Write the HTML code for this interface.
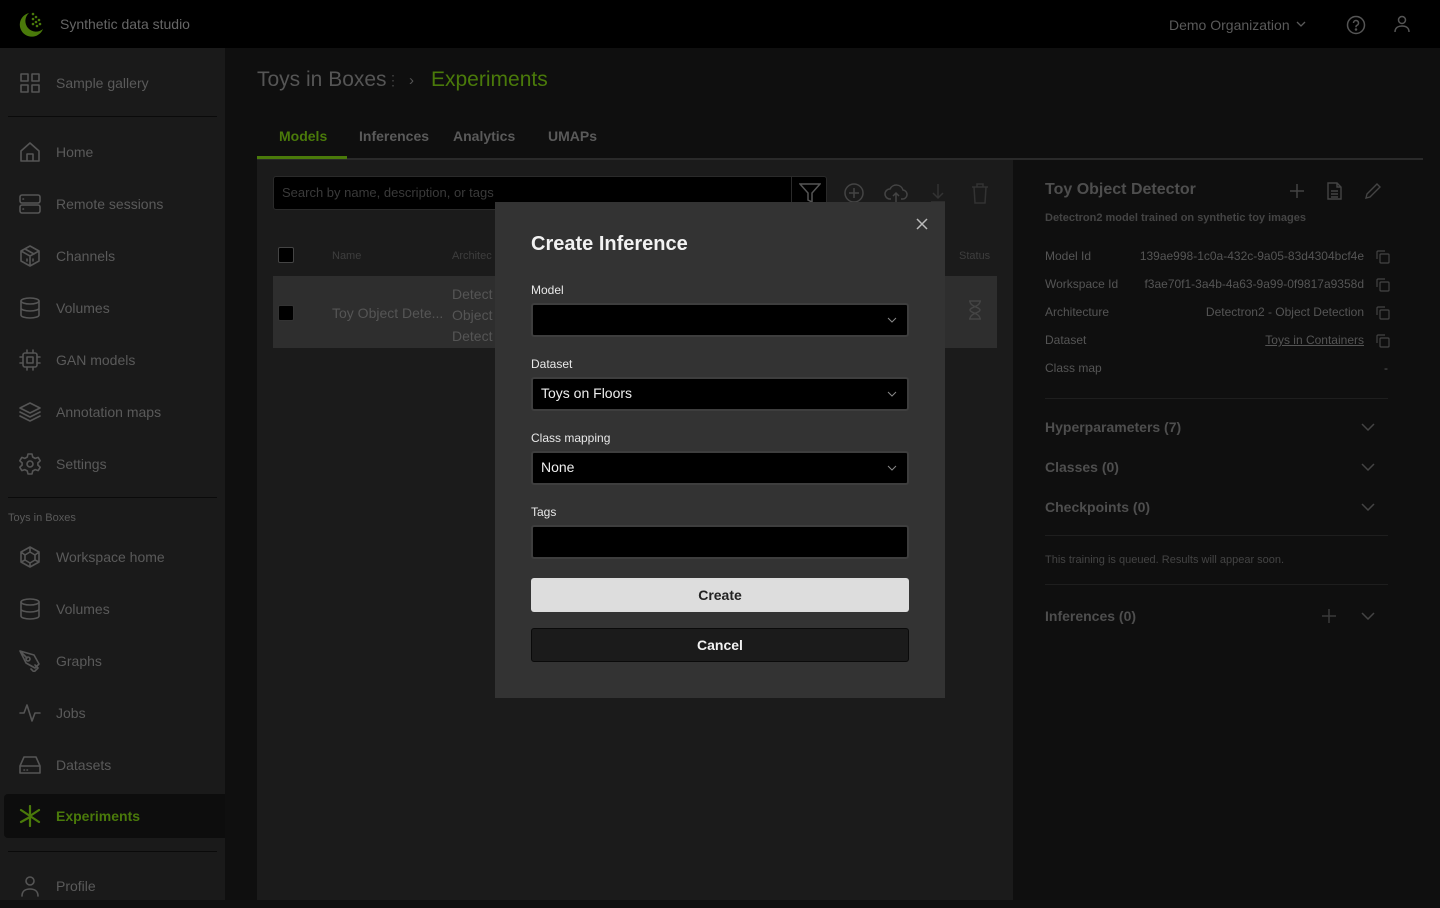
<!DOCTYPE html>
<html><head><meta charset="utf-8"><style>
*{margin:0;padding:0;box-sizing:border-box}
body{width:1440px;height:900px;overflow:hidden;background:#0f0f0f;font-family:"Liberation Sans",sans-serif;position:relative;color:#5e5e5e}
.a{position:absolute}
.top{left:0;top:0;width:1440px;height:48px;background:#000}
.side{left:0;top:48px;width:225px;height:852px;background:#1a1a1a}
.nav{position:absolute;left:0;width:225px;height:44px;display:flex;align-items:center}
.nav svg{position:absolute;left:19px;width:22px;height:22px;fill:none;stroke:#555;stroke-width:1.6;stroke-linecap:round;stroke-linejoin:round}
.nav span{position:absolute;left:56px;font-size:14px;color:#5a5a5a}
.hr{position:absolute;left:8px;width:209px;height:1px;background:#0a0a0a}
.tab{position:absolute;top:128px;font-size:14px;font-weight:bold;color:#5a5a5a}
.lbl{font-size:12px;color:#5a5a5a}
.row{position:absolute;left:1045px;width:345px;font-size:12px;color:#555;height:16px}
.row b{font-weight:normal;position:absolute;right:26px;top:0;color:#555}
.row i{position:absolute;right:0;top:1px;width:14px;height:14px}
.sec{position:absolute;left:1045px;font-size:14px;font-weight:bold;color:#4e4e4e}
.chev{position:absolute;left:1361px;width:14px;height:8px}
.m{position:absolute;left:495px;top:202px;width:450px;height:496px;background:#333}
.ml{position:absolute;left:36px;font-size:12px;color:#e8e8e8}
.in{position:absolute;left:36px;width:378px;height:34px;background:#000;border:2px solid #3e3e3e;border-radius:3px;font-size:14px;color:#eee;padding:6px 8px}
.in svg{position:absolute;right:10px;top:12px}
</style></head><body>
<div class="a top"></div>
<svg class="a" style="left:16px;top:10px" width="30" height="30" viewBox="0 0 30 30"><path d="M13 3A12 12 0 1 0 27 19A9 9 0 0 1 13 3Z" fill="#4a7a0a"/><g fill="#4a7a0a"><circle cx="17" cy="4" r="1.3"/><circle cx="20" cy="7" r="1.3"/><circle cx="17" cy="9" r="1.3"/><circle cx="23" cy="10" r="1.3"/><circle cx="20" cy="12" r="1.3"/><circle cx="24" cy="14" r="1.3"/><circle cx="17" cy="14" r="1.3"/><circle cx="21" cy="16" r="1.3"/></g></svg>
<div class="a" style="left:60px;top:16px;font-size:14px;color:#666">Synthetic data studio</div>
<div class="a" style="left:1169px;top:17px;font-size:14px;color:#5a5a5a">Demo Organization</div>
<svg class="a" style="left:1296px;top:21px" width="10" height="6"><path d="M1 1l4 4 4-4" stroke="#5a5a5a" fill="none" stroke-width="1.3"/></svg>
<svg class="a" style="left:1346px;top:15px" width="20" height="20" viewBox="0 0 20 20" fill="none" stroke="#555" stroke-width="1.5"><circle cx="10" cy="10" r="8.5"/><path d="M7.5 8a2.5 2.5 0 1 1 3.5 2.3c-.7.3-1 .8-1 1.5v.5"/><circle cx="10" cy="14.5" r=".5" fill="#555"/></svg>
<svg class="a" style="left:1393px;top:15px" width="18" height="18" viewBox="0 0 18 18" fill="none" stroke="#555" stroke-width="1.5"><circle cx="9" cy="5" r="3.5"/><path d="M2 17c0-4 3-6 7-6s7 2 7 6"/></svg>

<div class="a side">
 <div class="nav" style="top:13px"><svg viewBox="0 0 22 22"><rect x="2" y="2" width="7" height="7"/><rect x="13" y="2" width="7" height="7"/><rect x="2" y="13" width="7" height="7"/><rect x="13" y="13" width="7" height="7"/></svg><span>Sample gallery</span></div>
 <div class="hr" style="top:68px"></div>
 <div class="nav" style="top:82px"><svg viewBox="0 0 22 22"><path d="M2 10L11 2l9 8v10H2z M8 20v-7h6v7"/></svg><span>Home</span></div>
 <div class="nav" style="top:134px"><svg viewBox="0 0 22 22"><rect x="1" y="2" width="20" height="8" rx="2"/><rect x="1" y="12" width="20" height="8" rx="2"/><path d="M4 6h.5M4 16h.5"/></svg><span>Remote sessions</span></div>
 <div class="nav" style="top:186px"><svg viewBox="0 0 22 22"><path d="M11 1l9 5v10l-9 5-9-5V6z M2 6l9 5 9-5 M11 11v10 M6 4l9 5 M8 14l0 2 M14 14l0 2"/></svg><span>Channels</span></div>
 <div class="nav" style="top:238px"><svg viewBox="0 0 22 22"><ellipse cx="11" cy="4" rx="9" ry="3"/><path d="M2 4v14c0 1.7 4 3 9 3s9-1.3 9-3V4 M2 11c0 1.7 4 3 9 3s9-1.3 9-3"/></svg><span>Volumes</span></div>
 <div class="nav" style="top:290px"><svg viewBox="0 0 22 22"><rect x="4" y="4" width="14" height="14" rx="2"/><rect x="8" y="8" width="6" height="6"/><path d="M8 1v3M14 1v3M8 18v3M14 18v3M1 8h3M1 14h3M18 8h3M18 14h3"/></svg><span>GAN models</span></div>
 <div class="nav" style="top:342px"><svg viewBox="0 0 22 22"><path d="M11 2l10 5-10 5L1 7z M1 11l10 5 10-5 M1 15l10 5 10-5"/></svg><span>Annotation maps</span></div>
 <div class="nav" style="top:394px"><svg viewBox="0 0 22 22"><circle cx="11" cy="11" r="3"/><path d="M9 1h4l.7 3 2.5 1.4 3-1 2 3.4-2.3 2.1v2.2l2.3 2.1-2 3.4-3-1L13.7 18 13 21H9l-.7-3-2.5-1.4-3 1-2-3.4 2.3-2.1V9.9L.8 7.8l2-3.4 3 1L8.3 4z"/></svg><span>Settings</span></div>
 <div class="hr" style="top:449px"></div>
 <div class="a" style="left:8px;top:464px;font-size:11px;color:#5a5a5a">Toys in Boxes</div>
 <div class="nav" style="top:487px"><svg viewBox="0 0 22 22"><path d="M11 1l9 5v10l-9 5-9-5V6z M11 6l5 3v5l-5 3-5-3V9z M11 1v5M20 6l-4 3M20 16l-4-2M11 21v-4M2 16l4-2M2 6l4 3"/></svg><span>Workspace home</span></div>
 <div class="nav" style="top:539px"><svg viewBox="0 0 22 22"><ellipse cx="11" cy="4" rx="9" ry="3"/><path d="M2 4v14c0 1.7 4 3 9 3s9-1.3 9-3V4 M2 11c0 1.7 4 3 9 3s9-1.3 9-3"/></svg><span>Volumes</span></div>
 <div class="nav" style="top:591px"><svg viewBox="0 0 22 22"><path d="M1 1l14 4 5 9-4 4-9-5z M1 1l7 7"/><circle cx="9" cy="9" r="2"/><path d="M12 19l3 3 4-4-3-3"/></svg><span>Graphs</span></div>
 <div class="nav" style="top:643px"><svg viewBox="0 0 22 22"><path d="M1 11h4l3-8 5 16 3-8h5"/></svg><span>Jobs</span></div>
 <div class="nav" style="top:695px"><svg viewBox="0 0 22 22"><path d="M1 12l4-9h12l4 9v7H1z M1 12h20 M5 16h.5M8 16h.5"/></svg><span>Datasets</span></div>
 <div class="a" style="left:4px;top:746px;width:221px;height:44px;background:#0d0d0d;border-radius:4px 0 0 4px"></div>
 <div class="nav" style="top:746px"><svg viewBox="0 0 22 22" style="stroke:#4a7a0a;stroke-width:2.2"><path d="M11 1v20M2 5l18 12M2 17l9-5M20 5l-9 6"/></svg><span style="color:#4a7a0a;font-weight:bold">Experiments</span></div>
 <div class="hr" style="top:803px"></div>
 <div class="nav" style="top:816px"><svg viewBox="0 0 22 22"><circle cx="11" cy="6" r="4"/><path d="M3 21c0-5 3.5-7 8-7s8 2 8 7"/></svg><span>Profile</span></div>
</div>

<div class="a" style="left:257px;top:68px;font-size:21px;color:#555">Toys in Boxes</div>
<div class="a" style="left:386px;top:72px;font-size:14px;color:#444">⋮</div>
<div class="a" style="left:409px;top:72px;font-size:15px;color:#555">›</div>
<div class="a" style="left:431px;top:68px;font-size:21px;color:#4a7a0a">Experiments</div>
<div class="tab" style="left:279px;color:#4a7a0a">Models</div>
<div class="tab" style="left:359px">Inferences</div>
<div class="tab" style="left:453px">Analytics</div>
<div class="tab" style="left:548px">UMAPs</div>
<div class="a" style="left:257px;top:158px;width:1166px;height:2px;background:#2a2a2a"></div>
<div class="a" style="left:257px;top:156px;width:90px;height:3px;background:#4a7a0a"></div>

<div class="a" style="left:257px;top:160px;width:756px;height:740px;background:#1b1b1b"></div>
<div class="a" style="left:273px;top:176px;width:554px;height:34px;background:#000;border:1px solid #2a2a2a;border-radius:3px"></div>
<div class="a" style="left:282px;top:185px;font-size:13px;color:#3a3a3a">Search by name, description, or tags</div>
<div class="a" style="left:791px;top:177px;width:1px;height:32px;background:#2a2a2a"></div>
<svg class="a" style="left:799px;top:182px" width="22" height="22" viewBox="0 0 22 22" fill="none" stroke="#555" stroke-width="1.5"><path d="M1 2h20l-8 9v9l-4-2v-7z"/></svg>
<svg class="a" style="left:843px;top:182px" width="22" height="22" viewBox="0 0 22 22" fill="none" stroke="#444" stroke-width="1.5"><circle cx="11" cy="11" r="9"/><path d="M11 6v10M6 11h10"/></svg>
<svg class="a" style="left:884px;top:182px" width="24" height="22" viewBox="0 0 24 22" fill="none" stroke="#444" stroke-width="1.5"><path d="M7 17H6a5 5 0 0 1 0-10 7 7 0 0 1 13 1 4 4 0 0 1-1 9h-1M12 20v-9M9 14l3-3 3 3"/></svg>
<svg class="a" style="left:928px;top:182px" width="20" height="22" viewBox="0 0 20 22" fill="none" stroke="#333" stroke-width="1.5"><path d="M10 2v14M5 11l5 5 5-5M3 20h14"/></svg>
<svg class="a" style="left:970px;top:182px" width="20" height="22" viewBox="0 0 20 22" fill="none" stroke="#333" stroke-width="1.5"><path d="M2 5h16M7 5V2h6v3M4 5l1 16h10l1-16"/></svg>

<div class="a" style="left:278px;top:247px;width:16px;height:16px;background:#000;border:1px solid #444;border-radius:2px"></div>
<div class="a" style="left:332px;top:250px;font-size:11px;color:#3e3e3e">Name</div>
<div class="a" style="left:452px;top:250px;font-size:11px;color:#3e3e3e">Architec</div>
<div class="a" style="left:959px;top:250px;font-size:11px;color:#3e3e3e">Status</div>
<div class="a" style="left:273px;top:276px;width:724px;height:72px;background:#2e2e2e"></div>
<div class="a" style="left:278px;top:305px;width:16px;height:16px;background:#000;border:1px solid #333;border-radius:2px"></div>
<div class="a" style="left:332px;top:305px;font-size:14px;color:#555">Toy Object Dete...</div>
<div class="a" style="left:452px;top:284px;font-size:14px;line-height:21px;color:#555">Detect<br>Object<br>Detect</div>
<svg class="a" style="left:967px;top:300px" width="16" height="20" viewBox="0 0 16 20" fill="none" stroke="#444" stroke-width="1.5"><path d="M2 1h12M2 19h12M3 1c0 6 10 6 10 9s-10 3-10 9M13 1c0 6-10 6-10 9s10 3 10 9"/></svg>

<div class="a" style="left:1045px;top:181px;font-size:16px;font-weight:bold;color:#4e4e4e">Toy Object Detector</div>
<svg class="a" style="left:1290px;top:184px" width="14" height="14" fill="none" stroke="#444" stroke-width="1.5"><path d="M7 0v14M0 7h14"/></svg>
<svg class="a" style="left:1327px;top:182px" width="15" height="18" viewBox="0 0 15 18" fill="none" stroke="#444" stroke-width="1.4"><path d="M1 1h9l4 4v12H1z M10 1v4h4 M4 9h7M4 12h7M4 15h7"/></svg>
<svg class="a" style="left:1364px;top:182px" width="18" height="18" viewBox="0 0 18 18" fill="none" stroke="#444" stroke-width="1.4"><path d="M2 16l1-4L13 2l3 3L6 15z"/></svg>
<div class="a" style="left:1045px;top:212px;font-size:11px;font-weight:bold;color:#444">Detectron2 model trained on synthetic toy images</div>
<div class="row" style="top:249px">Model Id<b>139ae998-1c0a-432c-9a05-83d4304bcf4e</b><i><svg width="14" height="14" fill="none" stroke="#444" stroke-width="1.2"><path d="M1 9V2a1 1 0 0 1 1-1h7"/><rect x="4" y="4" width="9" height="9" rx="1"/></svg></i></div>
<div class="row" style="top:277px">Workspace Id<b>f3ae70f1-3a4b-4a63-9a99-0f9817a9358d</b><i><svg width="14" height="14" fill="none" stroke="#444" stroke-width="1.2"><path d="M1 9V2a1 1 0 0 1 1-1h7"/><rect x="4" y="4" width="9" height="9" rx="1"/></svg></i></div>
<div class="row" style="top:305px">Architecture<b>Detectron2 - Object Detection</b><i><svg width="14" height="14" fill="none" stroke="#444" stroke-width="1.2"><path d="M1 9V2a1 1 0 0 1 1-1h7"/><rect x="4" y="4" width="9" height="9" rx="1"/></svg></i></div>
<div class="row" style="top:333px">Dataset<b style="text-decoration:underline">Toys in Containers</b><i><svg width="14" height="14" fill="none" stroke="#444" stroke-width="1.2"><path d="M1 9V2a1 1 0 0 1 1-1h7"/><rect x="4" y="4" width="9" height="9" rx="1"/></svg></i></div>
<div class="row" style="top:361px">Class map<b style="right:2px">-</b></div>
<div class="a" style="left:1045px;top:398px;width:343px;height:1px;background:#1e1e1e"></div>
<div class="sec" style="top:419px">Hyperparameters (7)</div>
<svg class="chev" style="top:423px"><path d="M1 1l6 6 6-6" stroke="#444" fill="none" stroke-width="1.5"/></svg>
<div class="sec" style="top:459px">Classes (0)</div>
<svg class="chev" style="top:463px"><path d="M1 1l6 6 6-6" stroke="#444" fill="none" stroke-width="1.5"/></svg>
<div class="sec" style="top:499px">Checkpoints (0)</div>
<svg class="chev" style="top:503px"><path d="M1 1l6 6 6-6" stroke="#444" fill="none" stroke-width="1.5"/></svg>
<div class="a" style="left:1045px;top:535px;width:343px;height:1px;background:#1e1e1e"></div>
<div class="a" style="left:1045px;top:554px;font-size:11px;color:#444">This training is queued. Results will appear soon.</div>
<div class="a" style="left:1045px;top:584px;width:343px;height:1px;background:#1e1e1e"></div>
<div class="sec" style="top:608px">Inferences (0)</div>
<svg class="a" style="left:1322px;top:609px" width="14" height="14" fill="none" stroke="#3a3a3a" stroke-width="1.5"><path d="M7 0v14M0 7h14"/></svg>
<svg class="chev" style="top:612px"><path d="M1 1l6 6 6-6" stroke="#444" fill="none" stroke-width="1.5"/></svg>

<div class="m">
 <svg class="a" style="left:421px;top:16px" width="12" height="12" stroke="#bbb" stroke-width="1.5"><path d="M1 1l10 10M11 1L1 11"/></svg>
 <div class="a" style="left:36px;top:31px;font-size:20px;font-weight:bold;color:#f2f2f2">Create Inference</div>
 <div class="ml" style="top:81px">Model</div>
 <div class="in" style="top:101px"><svg width="10" height="6"><path d="M1 1l4 4 4-4" stroke="#888" fill="none"/></svg></div>
 <div class="ml" style="top:155px">Dataset</div>
 <div class="in" style="top:175px">Toys on Floors<svg width="10" height="6"><path d="M1 1l4 4 4-4" stroke="#888" fill="none"/></svg></div>
 <div class="ml" style="top:229px">Class mapping</div>
 <div class="in" style="top:249px">None<svg width="10" height="6"><path d="M1 1l4 4 4-4" stroke="#888" fill="none"/></svg></div>
 <div class="ml" style="top:303px">Tags</div>
 <div class="in" style="top:323px"></div>
 <div class="a" style="left:36px;top:376px;width:378px;height:34px;background:#ddd;border-radius:3px;text-align:center;line-height:34px;font-size:14px;font-weight:bold;color:#222">Create</div>
 <div class="a" style="left:36px;top:426px;width:378px;height:34px;background:#1b1b1b;border:1px solid #0a0a0a;border-radius:3px;text-align:center;line-height:32px;font-size:14px;font-weight:bold;color:#f2f2f2">Cancel</div>
</div>
</body></html>
